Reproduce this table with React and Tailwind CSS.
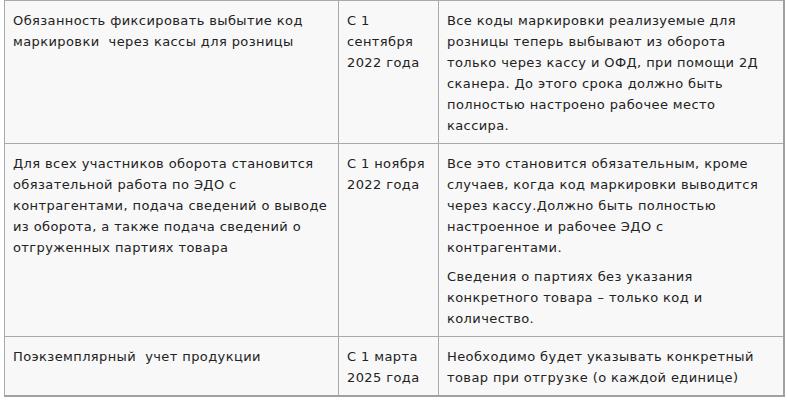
import React from "react";

const cell =
  "border border-[#aaaaaa] align-top pl-2 pr-2 pt-[9px] pb-[7px] whitespace-nowrap";

function Lines({ lines }) {
  return (
    <>
      {lines.map((l, i) => (
        <div key={i} className="whitespace-pre">
          {l}
        </div>
      ))}
    </>
  );
}

const rows = [
  {
    a: ["Обязанность фиксировать выбытие код", "маркировки  через кассы для розницы"],
    b: ["С 1", "сентября", "2022 года"],
    c: [
      [
        "Все коды маркировки реализуемые для",
        "розницы теперь выбывают из оборота",
        "только через кассу и ОФД, при помощи 2Д",
        "сканера. До этого срока должно быть",
        "полностью настроено рабочее место",
        "кассира.",
      ],
    ],
  },
  {
    a: [
      "Для всех участников оборота становится",
      "обязательной работа по ЭДО с",
      "контрагентами, подача сведений о выводе",
      "из оборота, а также подача сведений о",
      "отгруженных партиях товара",
    ],
    b: ["С 1 ноября", "2022 года"],
    c: [
      [
        "Все это становится обязательным, кроме",
        "случаев, когда код маркировки выводится",
        "через кассу.Должно быть полностью",
        "настроенное и рабочее ЭДО с",
        "контрагентами.",
      ],
      [
        "Сведения о партиях без указания",
        "конкретного товара – только код и",
        "количество.",
      ],
    ],
  },
  {
    a: ["Поэкземплярный  учет продукции"],
    b: ["С 1 марта", "2025 года"],
    c: [["Необходимо будет указывать конкретный", "товар при отгрузке (о каждой единице)"]],
  },
];

export default function App() {
  return (
    <div className="w-[788px] h-[400px] bg-white pl-1 overflow-hidden">
      <table
        className="border-collapse bg-[#f8f8f8] text-[#222222] text-[13px] leading-[21px] tracking-[0.4px] table-fixed w-[779px] border-r-2 border-b-2 border-[#a0a0a0]"
        style={{ fontFamily: '"DejaVu Sans", Verdana, sans-serif' }}
      >
        <colgroup>
          <col className="w-[334px]" />
          <col className="w-[100px]" />
          <col className="w-[345px]" />
        </colgroup>
        <tbody>
          {rows.map((r, i) => (
            <tr key={i}>
              <td className={cell}>
                <Lines lines={r.a} />
              </td>
              <td className={cell}>
                <Lines lines={r.b} />
              </td>
              <td className={cell}>
                <div className="flex flex-col gap-2">
                  {r.c.map((p, j) => (
                    <div key={j}>
                      <Lines lines={p} />
                    </div>
                  ))}
                </div>
              </td>
            </tr>
          ))}
        </tbody>
      </table>
    </div>
  );
}
